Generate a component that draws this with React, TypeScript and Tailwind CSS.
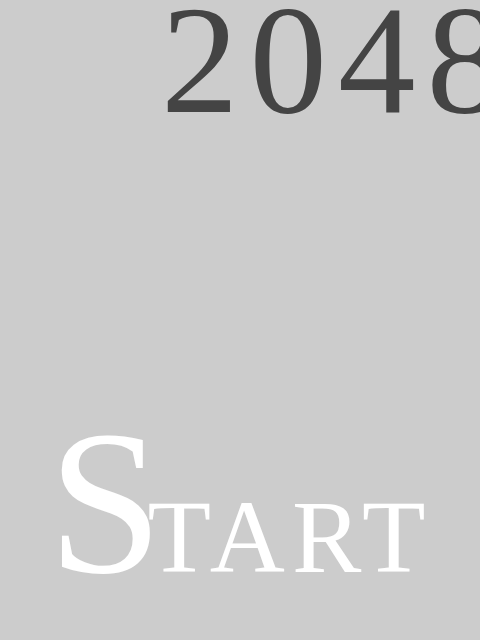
export default function App() {
  return (
    <div
      className="w-[480px] h-[640px] bg-[#cccccc] overflow-hidden flex flex-col"
      style={{ fontFamily: '"Liberation Serif", "Times New Roman", serif' }}
    >
      <div className="pl-[161px] mt-[-17px] text-[155px] leading-none tracking-[11px] text-[#444444] whitespace-nowrap">
        2048
      </div>
      <div className="pl-[48px] mt-[262px] leading-none text-white whitespace-nowrap">
        <span className="text-[206px]">S</span>
        <span className="text-[104px] ml-[-15px] tracking-[7px]">TART</span>
      </div>
    </div>
  );
}
